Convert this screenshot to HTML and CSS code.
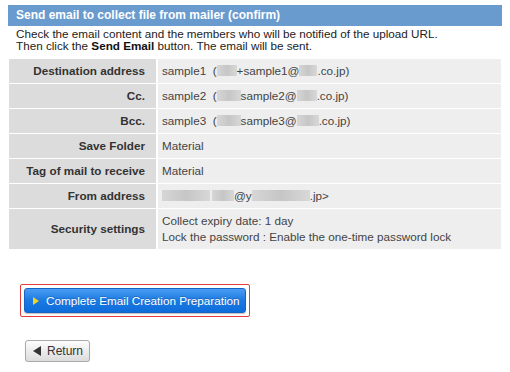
FILE: index.html
```html
<!DOCTYPE html>
<html lang="en">

<head>
    <meta charset="UTF-8">
    <title>Send email to collect file from mailer (confirm)</title>
    <link rel="stylesheet" href="styles.css">
</head>

<body>
    <h1 class="title">Send email to collect file from mailer (confirm)</h1>
    <p class="intro">
        Check the email content and the members who will be notified of the upload URL.<br>
        Then click the <b>Send Email</b> button. The email will be sent.
    </p>

    <table class="confirm">
        <tr>
            <th>Destination address</th>
            <td>sample1&nbsp; (<span class="mask w20"></span>+sample1@<span class="mask w18"></span>.co.jp)</td>
        </tr>
        <tr>
            <th>Cc.</th>
            <td>sample2&nbsp; (<span class="mask w24"></span>sample2@<span class="mask w20"></span>.co.jp)</td>
        </tr>
        <tr>
            <th>Bcc.</th>
            <td>sample3&nbsp; (<span class="mask w24"></span>sample3@<span class="mask w22"></span>.co.jp)</td>
        </tr>
        <tr>
            <th>Save Folder</th>
            <td>Material</td>
        </tr>
        <tr>
            <th>Tag of mail to receive</th>
            <td>Material</td>
        </tr>
        <tr>
            <th>From address</th>
            <td><span class="mask w48"></span><span class="mask w22"></span>@y<span class="mask w58"></span>.jp&gt;</td>
        </tr>
        <tr>
            <th>Security settings</th>
            <td>
                Collect expiry date: 1 day<br>
                Lock the password : Enable the one-time password lock
            </td>
        </tr>
    </table>

    <div class="actions">
        <div class="focus-ring">
            <button class="btn-primary"><span class="arrow"></span>Complete Email Creation Preparation</button>
        </div>
    </div>

    <div class="back">
        <button class="btn-back"><span class="arrow-left"></span>Return</button>
    </div>
</body>

</html>
```

FILE: styles.css
```css
body {
    font-family: "Liberation Sans", Arial, sans-serif;
    font-size: 11.7px;
    color: #222;
    background-color: #fff;
    margin: 5px 8px;
}

.title {
    margin: 0;
    padding: 0 8px;
    height: 21px;
    line-height: 21px;
    font-size: 12px;
    font-weight: bold;
    color: #fff;
    background-color: #6a9bcf;
}

.intro {
    margin: 2px 0 0;
    padding: 0 8px;
    line-height: 12px;
    color: #222;
}

.intro b {
    color: #111;
}

.confirm {
    width: 100%;
    margin-top: 6px;
    border-collapse: separate;
    border-spacing: 1px;
}

.confirm th,
.confirm td {
    padding: 4px 4px;
    line-height: 16px;
    height: 16px;
}

.confirm th {
    width: 132px;
    text-align: right;
    padding-right: 11px;
    font-weight: bold;
    color: #333;
    background-color: #dcdcdc;
    white-space: nowrap;
}

.confirm td {
    color: #444;
    background-color: #eee;
    border-left: 1px solid #fff;
}

.mask {
    display: inline-block;
    height: 11px;
    vertical-align: -1px;
    background: linear-gradient(90deg, #d6d6d6, #c6c6c6 50%, #d8d8d8);
}

.w18 { width: 18px; }
.w20 { width: 20px; }
.w22 { width: 22px; }
.w24 { width: 24px; }
.w48 { width: 48px; margin-right: 2px; }
.w58 { width: 58px; }

.actions {
    margin-top: 34px;
    padding-left: 12px;
}

.focus-ring {
    display: inline-block;
    padding: 3px;
    border: 1px solid #e63c3c;
    border-radius: 2px;
}

.btn-primary {
    display: flex;
    align-items: center;
    height: 25px;
    padding: 0 5px 0 8px;
    font-family: "Liberation Sans", Arial, sans-serif;
    font-size: 11.7px;
    color: #fff;
    white-space: nowrap;
    border: 1px solid #1563c4;
    border-radius: 3px;
    background: linear-gradient(#4a9cf2, #1b79e2 50%, #0f6ddb);
    box-shadow: 0 1px 1px rgba(0, 0, 0, 0.25);
    text-shadow: 0 -1px 0 rgba(0, 0, 0, 0.2);
}

.arrow {
    width: 0;
    height: 0;
    margin-right: 7px;
    border-top: 4px solid transparent;
    border-bottom: 4px solid transparent;
    border-left: 6px solid #f1d422;
}

.back {
    margin-top: 23px;
    padding-left: 17px;
}

.btn-back {
    display: flex;
    align-items: center;
    height: 22px;
    padding: 0 6px 0 7px;
    font-family: "Liberation Sans", Arial, sans-serif;
    font-size: 12px;
    color: #333;
    border: 1px solid #a9a9a9;
    border-radius: 3px;
    background: linear-gradient(#fdfdfd, #e9e9e9 60%, #dcdcdc);
    box-shadow: 0 1px 1px rgba(0, 0, 0, 0.15);
}

.arrow-left {
    width: 0;
    height: 0;
    margin-right: 6px;
    border-top: 5px solid transparent;
    border-bottom: 5px solid transparent;
    border-right: 8px solid #333;
}
```
